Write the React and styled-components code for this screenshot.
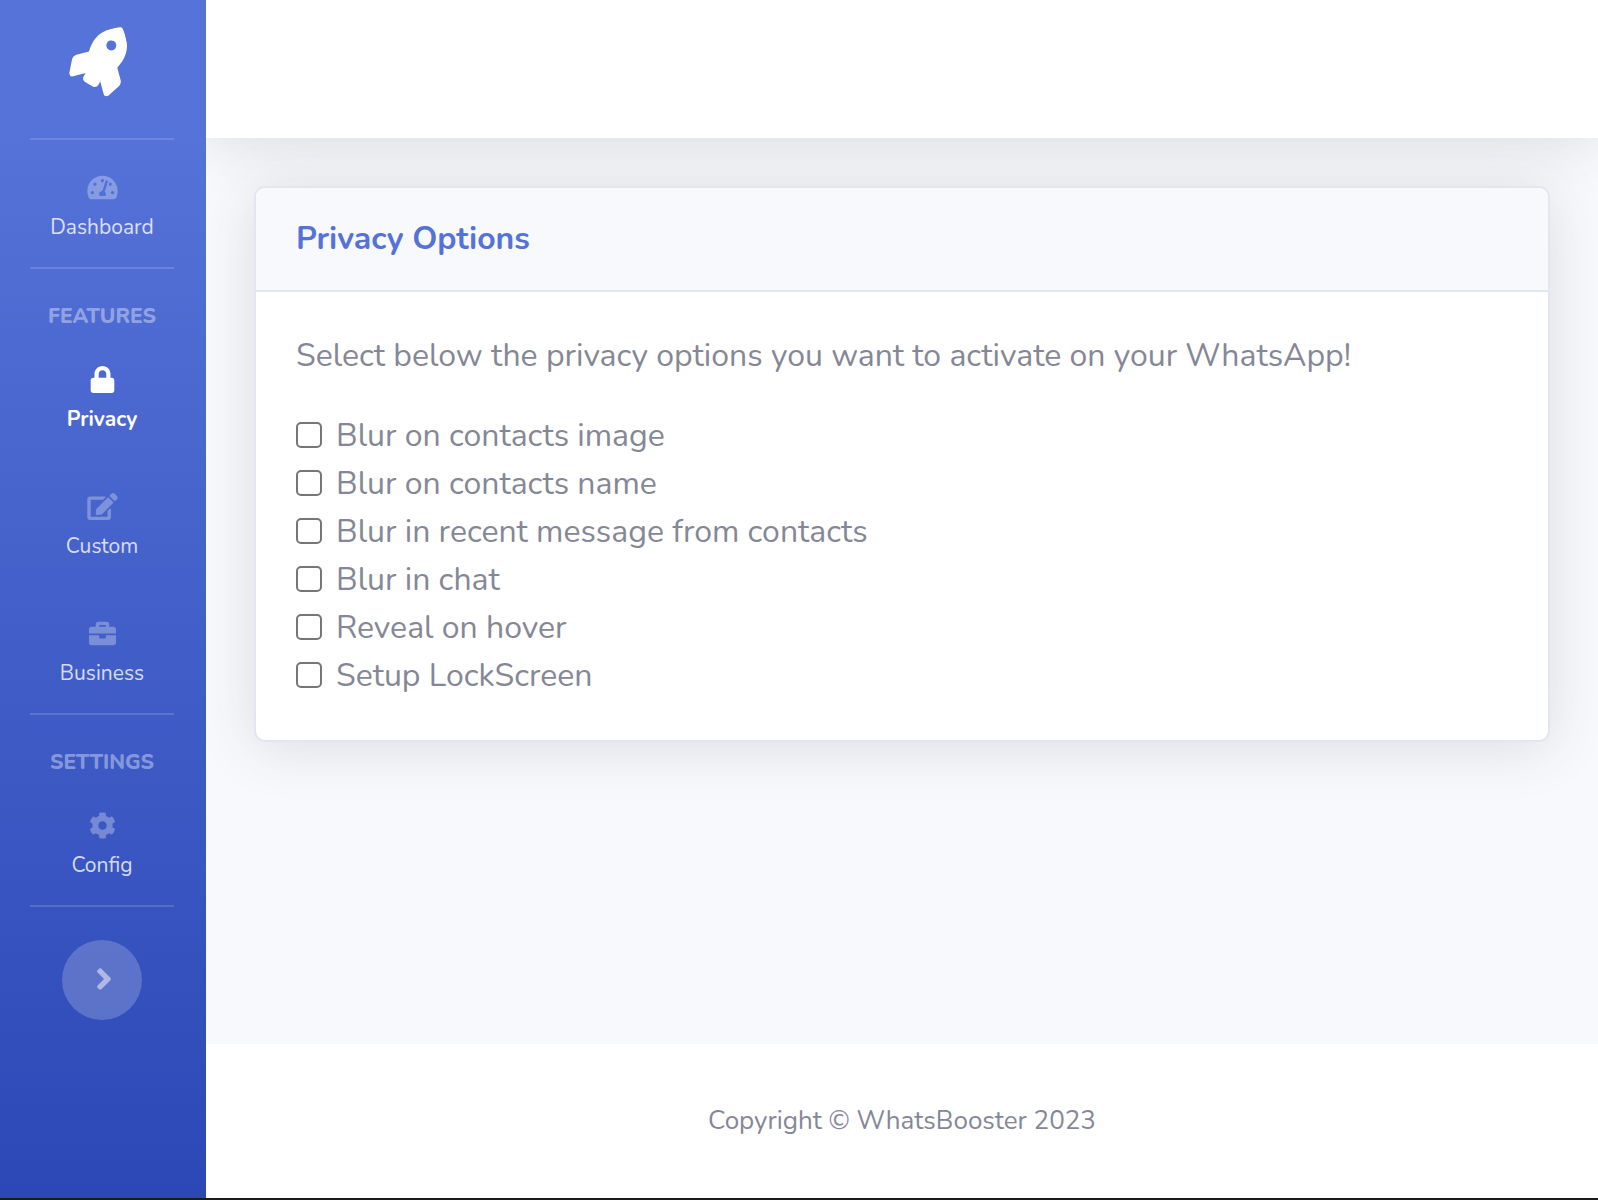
// PRIVACY OPTIONS PAGE

import React from 'react'
import styled, { createGlobalStyle } from 'styled-components'
import {
  FaRocket,
  FaTachometerAlt,
  FaLock,
  FaEdit,
  FaBriefcase,
  FaCog,
  FaAngleRight
} from 'react-icons/fa'


const GlobalStyle = createGlobalStyle`
  * {
    box-sizing: border-box;
  }

  body {
    margin: 0;
    color: #858796;
    background: #ffffff;
    font-family: Nunito, Lato, sans-serif;
    font-size: 32px;
    line-height: 48px;
  }
`

const Page = styled.div`
  display: flex;
  min-height: 100vh;
  border-bottom: 2px solid #1b1b1b;
`

// ---- sidebar

const Sidebar = styled.nav`
  display: flex;
  flex-direction: column;
  flex-shrink: 0;
  width: 206px;
  padding-right: 2px;
  background: linear-gradient(180deg, #5673d9 10%, #2c48b6 100%);
`

const Brand = styled.a`
  display: flex;
  justify-content: center;
  padding: 33px 4px 41px 0;
  color: #ffffff;

  svg {
    transform: rotate(-15deg);
  }
`

const Divider = styled.hr`
  width: 144px;
  height: 2px;
  margin: 0 auto;
  border: 0;
  background: rgba(255, 255, 255, 0.15);
`

const Heading = styled.div`
  padding: 33px 0 2px;
  color: rgba(255, 255, 255, 0.4);
  font-size: 21px;
  font-weight: 800;
  line-height: 28px;
  text-align: center;
  text-transform: uppercase;
`

const NavLink = styled.a`
  display: flex;
  flex-direction: column;
  align-items: center;
  gap: 10px;
  padding: 34px 0 24px;
  color: ${props => (props.$active ? '#ffffff' : 'rgba(255, 255, 255, 0.8)')};
  font-size: 21px;
  font-weight: ${props => (props.$active ? 700 : 400)};
  line-height: 32px;
  text-decoration: none;

  /* wide enough for the 576 unit icons at the same height */
  svg {
    width: 31px;
    height: 27px;
    color: ${props => (props.$active ? '#ffffff' : 'rgba(255, 255, 255, 0.3)')};
  }
`

const Toggle = styled.button`
  display: flex;
  align-items: center;
  justify-content: center;
  width: 80px;
  height: 80px;
  margin: 33px auto;
  padding: 0 0 2px 4px;
  border: 0;
  border-radius: 50%;
  color: rgba(255, 255, 255, 0.5);
  background: rgba(255, 255, 255, 0.2);
  cursor: pointer;
`

// ---- content

const Content = styled.div`
  display: flex;
  flex: 1;
  flex-direction: column;
  min-width: 0;
  overflow: hidden;
  background: #f8f9fc;
`

const Topbar = styled.header`
  height: 138px;
  background: #ffffff;
  box-shadow: 0 5px 56px rgba(58, 59, 69, 0.15);
`

const Main = styled.main`
  flex: 1;
  padding: 48px;
`

const Card = styled.section`
  border: 2px solid #e3e6f0;
  border-radius: 11px;
  background: #ffffff;
  box-shadow: 0 5px 56px rgba(58, 59, 69, 0.15);
`

const CardHeader = styled.div`
  padding: 32px 40px;
  border-bottom: 2px solid #e3e6f0;
  border-radius: 9px 9px 0 0;
  background: #f8f9fc;
`

const Title = styled.h1`
  margin: 0;
  color: #5572d9;
  font-size: 32px;
  font-weight: 700;
  line-height: 38px;
`

const CardBody = styled.div`
  padding: 40px;
`

const Intro = styled.p`
  margin: 0 0 32px;
`

const Option = styled.label`
  display: flex;
  align-items: center;
  gap: 14px;
`

const Checkbox = styled.input`
  flex-shrink: 0;
  width: 26px;
  height: 26px;
  margin: 0 0 2px;
  border: 2px solid #767676;
  border-radius: 5px;
  background: #ffffff;
  appearance: none;

  &:checked {
    border-color: #5572d9;
    background: #5572d9;
  }
`

const Footer = styled.footer`
  padding: 53px 48px;
  background: #ffffff;
  font-size: 26px;
  text-align: center;
`


const options = [
  { id: 'blurImage', label: 'Blur on contacts image' },
  { id: 'blurName', label: 'Blur on contacts name' },
  { id: 'blurRecent', label: 'Blur in recent message from contacts' },
  { id: 'blurChat', label: 'Blur in chat' },
  { id: 'reveal', label: 'Reveal on hover' },
  { id: 'lockScreen', label: 'Setup LockScreen' }
]


const NavItem = ({ icon: Icon, label, active }) => (
  <NavLink href="#" $active={active}>
    <Icon />
    <span>{label}</span>
  </NavLink>
)


const App = () => {

  const renderOptions = () => {
    return options.map(option => (
      <Option key={option.id} htmlFor={option.id}>
        <Checkbox type="checkbox" id={option.id} />
        <span>{option.label}</span>
      </Option>
    ))
  }

  return (
    <Page>
      <GlobalStyle />

      <Sidebar>
        <Brand href="#" aria-label="WhatsBooster">
          <FaRocket size={64} />
        </Brand>
        <Divider />
        <NavItem icon={FaTachometerAlt} label="Dashboard" />
        <Divider />
        <Heading>Features</Heading>
        <NavItem icon={FaLock} label="Privacy" active />
        <NavItem icon={FaEdit} label="Custom" />
        <NavItem icon={FaBriefcase} label="Business" />
        <Divider />
        <Heading>Settings</Heading>
        <NavItem icon={FaCog} label="Config" />
        <Divider />
        <Toggle type="button" aria-label="Toggle sidebar">
          <FaAngleRight size={34} />
        </Toggle>
      </Sidebar>

      <Content>
        <Topbar />
        <Main>
          <Card>
            <CardHeader>
              <Title>Privacy Options</Title>
            </CardHeader>
            <CardBody>
              <Intro>Select below the privacy options you want to activate on your WhatsApp!</Intro>
              {renderOptions()}
            </CardBody>
          </Card>
        </Main>
        <Footer>Copyright © WhatsBooster 2023</Footer>
      </Content>
    </Page>
  )
}

export default App
